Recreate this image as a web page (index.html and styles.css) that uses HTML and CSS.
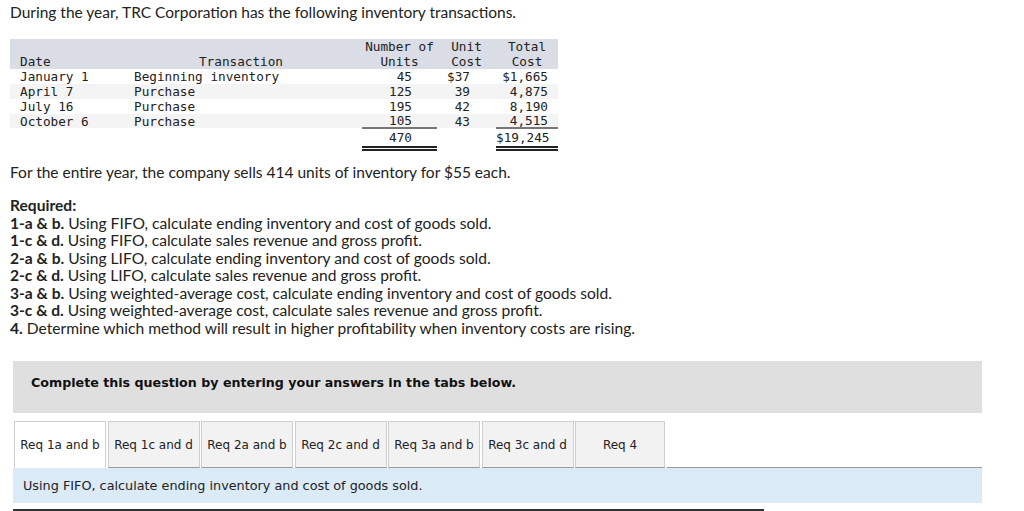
FILE: index.html
```html
<!DOCTYPE html>
<html>
<head>
<meta charset="utf-8">
<link rel="stylesheet" href="styles.css">
</head>
<body>
<div class="page">
  <p class="intro">During the year, TRC Corporation has the following inventory transactions.</p>
  <table class="inv">
    <colgroup>
      <col class="k-date"><col class="k-tr"><col class="k-sp"><col class="k-num"><col class="k-unit"><col class="k-tot">
    </colgroup>
    <thead>
      <tr class="h1"><th class="c-date"></th><th class="c-tr"></th><th></th><th class="c-num">Number of</th><th class="c-unit">Unit</th><th class="c-tot">Total</th></tr>
      <tr class="h2"><th class="c-date">Date</th><th class="c-tr">Transaction</th><th></th><th class="c-num">Units</th><th class="c-unit">Cost</th><th class="c-tot">Cost</th></tr>
    </thead>
    <tbody>
      <tr><td class="c-date">January 1</td><td class="c-tr">Beginning inventory</td><td></td><td class="c-num">45</td><td class="c-unit">$37</td><td class="c-tot">$1,665</td></tr>
      <tr class="alt"><td class="c-date">April 7</td><td class="c-tr">Purchase</td><td></td><td class="c-num">125</td><td class="c-unit">39</td><td class="c-tot">4,875</td></tr>
      <tr><td class="c-date">July 16</td><td class="c-tr">Purchase</td><td></td><td class="c-num">195</td><td class="c-unit">42</td><td class="c-tot">8,190</td></tr>
      <tr class="alt last"><td class="c-date">October 6</td><td class="c-tr">Purchase</td><td></td><td class="c-num">105</td><td class="c-unit">43</td><td class="c-tot">4,515</td></tr>
      <tr class="total"><td class="c-date"></td><td class="c-tr"></td><td></td><td class="c-num">470</td><td class="c-unit"></td><td class="c-tot">$19,245</td></tr>
    </tbody>
  </table>
  <p class="sells">For the entire year, the company sells 414 units of inventory for $55 each.</p>
  <div class="required">
    <p class="req-title">Required:</p>
    <p><b>1-a &amp; b.</b> Using FIFO, calculate ending inventory and cost of goods sold.</p>
    <p><b>1-c &amp; d.</b> Using FIFO, calculate sales revenue and gross profit.</p>
    <p><b>2-a &amp; b.</b> Using LIFO, calculate ending inventory and cost of goods sold.</p>
    <p><b>2-c &amp; d.</b> Using LIFO, calculate sales revenue and gross profit.</p>
    <p><b>3-a &amp; b.</b> Using weighted-average cost, calculate ending inventory and cost of goods sold.</p>
    <p><b>3-c &amp; d.</b> Using weighted-average cost, calculate sales revenue and gross profit.</p>
    <p><b>4.</b> Determine which method will result in higher profitability when inventory costs are rising.</p>
  </div>
  <div class="answer">
    <div class="notice">Complete this question by entering your answers in the tabs below.</div>
    <div class="tabs">
      <div class="tab active">Req 1a and b</div>
      <div class="tab">Req 1c and d</div>
      <div class="tab">Req 2a and b</div>
      <div class="tab">Req 2c and d</div>
      <div class="tab">Req 3a and b</div>
      <div class="tab">Req 3c and d</div>
      <div class="tab wide">Req 4</div>
      <div class="tab-fill"></div>
    </div>
    <div class="panel">Using FIFO, calculate ending inventory and cost of goods sold.</div>
    <div class="grid">
      <div class="gcell w1"></div>
      <div class="gcell w2"></div>
      <div class="gcell w3"></div>
      <div class="gcell w4"></div>
    </div>
  </div>
</div>
</body>
</html>
```

FILE: styles.css
```css
html, body {
  margin: 0;
  padding: 0;
  background: #fff;
}
.page {
  padding: 3px 0 0 10px;
  font-family: Lato, "Liberation Sans", sans-serif;
  color: #222;
}
p { margin: 0; }
.intro {
  font-size: 15.5px;
  line-height: 18px;
}
.inv {
  margin-top: 18px;
  border-collapse: collapse;
  table-layout: fixed;
  width: 548px;
  font-family: "DejaVu Sans Mono", monospace;
  font-size: 12.7px;
  color: #222;
}
.k-date { width: 124px; }
.k-tr { width: 151px; }
.k-sp { width: 77px; }
.k-num { width: 75px; }
.k-unit { width: 59px; }
.k-tot { width: 62px; }
.inv th, .inv td {
  padding: 0;
  line-height: 15px;
  height: 15px;
  font-weight: normal;
  white-space: nowrap;
  overflow: visible;
}
.inv thead tr { background: #dadde5; }
.inv .h2 th { height: 15px; }
.inv .c-date { text-align: left; padding-left: 10px; }
.inv td.c-tr { text-align: left; }
.inv th.c-tr { text-align: right; padding-right: 2px; }
.inv th.c-num, .inv th.c-unit, .inv th.c-tot { text-align: center; }
.inv td.c-num { text-align: right; padding-right: 25px; }
.inv td.c-unit { text-align: right; padding-right: 26px; }
.inv td.c-tot { text-align: right; padding-right: 10px; }
.inv tr.alt td { background: #f4f4f4; }
.inv tr.last td { height: 13px; line-height: 13px; }
.inv tr.last td.c-num, .inv tr.last td.c-tot { border-bottom: 2px solid #777; }
.inv tr.total td { height: 15px; line-height: 17px; }
.inv tr.total td.c-num, .inv tr.total td.c-tot { border-bottom: 5px double #222; }
.sells {
  margin-top: 12px;
  font-size: 15.5px;
  line-height: 18px;
}
.required {
  margin-top: 16px;
  font-size: 15.6px;
  line-height: 17.5px;
}
.req-title { font-weight: bold; }
.required b { font-weight: bold; }
.answer {
  margin: 24px 0 0 3px;
  width: 969px;
  font-family: "DejaVu Sans", Verdana, sans-serif;
  color: #111;
}
.notice {
  background: #dfdfdf;
  height: 52px;
  padding-left: 18px;
  font-size: 12.66px;
  font-weight: bold;
  line-height: 43px;
}
.tabs {
  margin-top: 8px;
  display: flex;
  align-items: stretch;
  height: 47px;
}
.tab {
  box-sizing: border-box;
  flex: none;
  height: 47px;
  width: 92px;
  margin-right: 1.5px;
  background: #f2f2f2;
  border: 1px solid #cfcfcf;
  border-bottom: 1px solid #9a9a9a;
  font-size: 12px;
  line-height: 46px;
  text-align: center;
  color: #222;
}
.tab.active {
  margin-left: 1px;
  background: #fff;
  border-bottom-color: #fff;
}
.tab.wide { width: 90px; }
.tab-fill {
  flex: 1;
  border-bottom: 1px solid #9a9a9a;
}
.panel {
  background: #dbeaf7;
  height: 35px;
  line-height: 36px;
  padding-left: 10px;
  font-size: 12.8px;
  color: #222;
}
.grid {
  margin-top: 6px;
  display: flex;
  height: 10px;
}
.gcell {
  box-sizing: border-box;
  height: 10px;
  background: #8ea9c9;
  border-top: 2px solid #333;
  border-right: 1px solid #333;
}
.gcell.w1 { width: 152px; border-left: 1px solid #333; }
.gcell.w2 { width: 210px; }
.gcell.w3 { width: 202px; }
.gcell.w4 { width: 187px; }
```
